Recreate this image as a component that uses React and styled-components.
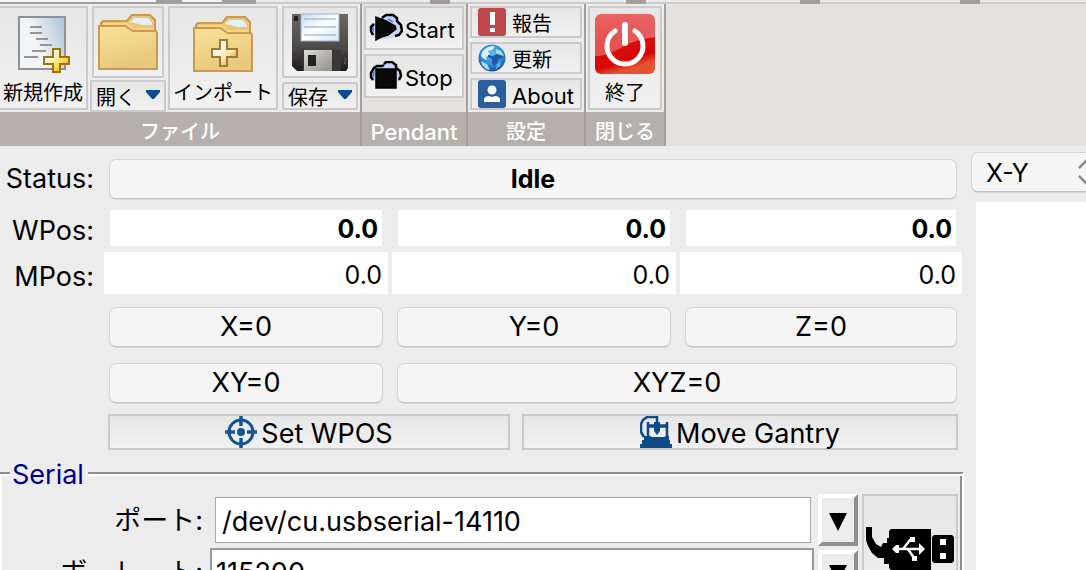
import React from "react";
import styled, { createGlobalStyle, css } from "styled-components";

const ui = '"Inter", "Noto Sans CJK JP", sans-serif';
const ink = "#000";
const face = "#ececec";
const edge = "#cbcbcb";
const taupe = "#a39e9b";

const GlobalStyle = createGlobalStyle`
  *, *::before, *::after { box-sizing: border-box; }
  html, body, #root { height: 100%; }
  body {
    margin: 0;
    overflow: hidden;
    background: ${face};
    color: ${ink};
    font-family: ${ui};
    font-size: 27px;
  }
  button, input, select { font: inherit; color: inherit; }
`;

const Window = styled.div`
  display: flex;
  flex-direction: column;
  height: 100%;
  overflow: hidden;
`;

/* Tab strip */

const TabStrip = styled.div`
  display: flex;
  flex: none;
  height: 4px;
  overflow: hidden;
  background: ${taupe};
`;

const TabFoot = styled.div`
  flex: ${(p) => (p.$grow ? "1 1 0" : "none")};
  width: ${(p) => p.$width || 0}px;
  margin-right: ${(p) => p.$gap || 0}px;
  background: ${(p) => (p.$raised ? "#f4f4f4" : "#e8eaeb")};
  border-bottom: 2px solid ${(p) => (p.$raised ? taupe : edge)};
`;

/* Ribbon */

const Ribbon = styled.header`
  display: flex;
  flex: none;
  height: 142px;
  background: #e5e1de;
`;

const Group = styled.section`
  display: flex;
  flex-direction: column;
  flex: none;
  border-right: 2px solid ${taupe};
`;

const GroupTools = styled.div`
  display: flex;
  align-items: flex-start;
  height: 108px;
  gap: ${(p) => p.$gap || 0}px;
  padding: 2px 2px 0 ${(p) => (p.$flush ? 0 : 2)}px;
  background: ${(p) => (p.$open ? "transparent" : face)};
`;

const GroupTitle = styled.h2`
  height: 34px;
  margin: 0;
  padding-top: 4px;
  background: #b5b0ad;
  color: #fff;
  font-size: ${(p) => (p.$latin ? 22 : 20)}px;
  font-weight: 500;
  line-height: 32px;
  text-align: center;
  white-space: nowrap;
`;

const Stack = styled.div`
  display: flex;
  flex-direction: column;
  align-items: center;
  gap: ${(p) => p.$gap || 0}px;
  margin-left: ${(p) => (p.$apart ? 2 : 0)}px;
  background: ${face};
`;

const Caption = styled.span`
  padding-top: 4px;
`;

const bevel = css`
  border: 2px solid ${edge};
  border-radius: 0;
  background: linear-gradient(#e6e6e6, #f1f1f1);
  padding: 0;
  margin: 0;
`;

const LargeTool = styled.button`
  ${bevel}
  display: flex;
  flex-direction: column;
  align-items: center;
  width: ${(p) => p.$width}px;
  height: 104px;
  padding-top: 6px;
  gap: 2px;
  font-size: 20px;
  line-height: 26px;
  white-space: nowrap;
  border-left-width: ${(p) => (p.$cut ? 0 : 2)}px;
`;

const IconTool = styled.button`
  ${bevel}
  display: flex;
  justify-content: center;
  align-items: flex-start;
  width: ${(p) => p.$width}px;
  height: 72px;
  padding-top: 4px;
`;

const MenuTool = styled.button`
  ${bevel}
  display: flex;
  align-items: center;
  justify-content: center;
  gap: 10px;
  width: 76px;
  height: ${(p) => p.$height}px;
  font-size: 20px;
  line-height: 24px;
  white-space: nowrap;
`;

const RowTool = styled.button`
  ${bevel}
  display: flex;
  align-items: center;
  gap: ${(p) => p.$gap}px;
  width: ${(p) => p.$width}px;
  height: ${(p) => p.$height}px;
  padding: 0 0 0 ${(p) => p.$inset}px;
  font-size: ${(p) => (p.$latin ? 22 : 20)}px;
  line-height: 24px;
  white-space: nowrap;
  svg { flex: none; }
`;

/* Body */

const Body = styled.main`
  display: grid;
  grid-template-columns: minmax(0, 1fr) 122px;
  flex: 1;
  min-height: 0;
  overflow: hidden;
`;

const Panel = styled.div`
  min-width: 0;
`;

const Readout = styled.div`
  display: grid;
  grid-template-columns: 100px minmax(0, 284fr) minmax(0, 284fr) minmax(0, 282fr);
  column-gap: 4px;
  padding: 13px 2px 0 0;
`;

const RowLabel = styled.label`
  padding-right: 6px;
  text-align: right;
  line-height: ${(p) => p.$height}px;
  white-space: nowrap;
  grid-column: 1;
`;

const PushButton = styled.button`
  grid-column: ${(p) => p.$column};
  height: 40px;
  margin: 0 5px ${(p) => p.$below}px;
  padding: 0;
  border: 1px solid #d4d4d4;
  border-bottom-color: #c4c4c4;
  border-radius: 7px;
  background: #f5f5f5;
  box-shadow: 0 1px 1px rgba(0, 0, 0, 0.08);
  font-size: ${(p) => (p.$strong ? 25 : 27)}px;
  font-weight: ${(p) => (p.$strong ? 700 : 400)};
  line-height: 38px;
`;

const WorkField = styled.input`
  min-width: 0;
  height: 36px;
  margin: 0 6px 6px;
  padding: 2px 4px 0 0;
  border: 0;
  background: #fff;
  text-align: right;
  font-size: 25px;
  font-weight: 700;
`;

const MachineField = styled.input`
  min-width: 0;
  height: 42px;
  margin: 0 0 13px;
  padding: 4px 6px 0 0;
  border: 0;
  background: #fff;
  text-align: right;
  font-size: 25px;
`;

const Actions = styled.div`
  display: grid;
  grid-template-columns: 402fr 436fr;
  gap: 12px;
  padding: 0 6px 0 108px;
`;

const ActionButton = styled.button`
  ${bevel}
  display: flex;
  align-items: center;
  justify-content: center;
  gap: 4px;
  height: 36px;
  line-height: 28px;
  white-space: nowrap;
  svg { flex: none; }
`;

const Fieldset = styled.fieldset`
  min-width: 0;
  height: 200px;
  margin: 8px 0 0 -2px;
  padding: 6px 2px 0 10px;
  border: 2px solid;
  border-color: #8f8f8f #fff #fff #8f8f8f;
  box-shadow: inset 2px 2px 0 #fff, inset -2px -2px 0 #8f8f8f;
`;

const Legend = styled.legend`
  height: 30px;
  padding: 0 4px 0 2px;
  background: ${face};
  color: #00008b;
  line-height: 34px;
`;

const PortGrid = styled.div`
  display: grid;
  grid-template-columns: 193px minmax(0, 1fr) 40px 96px;
  grid-template-rows: 52px auto;
  column-gap: 4px;
  align-items: start;
  padding-right: 2px;
`;

const PortLabel = styled.label`
  padding-top: 6px;
  text-align: right;
  line-height: 42px;
  white-space: nowrap;
  grid-column: 1;
`;

const Entry = styled.input`
  min-width: 0;
  height: 46px;
  margin: 3px 3px 0 8px;
  padding: 2px 6px 0;
  border: 1px solid #a8a8a8;
  border-radius: 0;
  background: #fff;
`;

const SunkenEntry = styled(Entry)`
  height: 48px;
  margin: 2px 0 0 3px;
  padding: 0 4px;
  border: 2px solid #999;
`;

const DropButton = styled.button`
  display: flex;
  align-items: center;
  justify-content: center;
  height: ${(p) => p.$height}px;
  margin-top: ${(p) => p.$above || 0}px;
  padding: 4px 0 0;
  border: 4px solid;
  border-color: #fff #8f8f8f #8f8f8f #fff;
  background: ${face};
`;

const ConnectButton = styled.button`
  ${bevel}
  grid-column: 4;
  grid-row: 1 / span 2;
  display: flex;
  justify-content: center;
  height: 140px;
  padding-top: 30px;
`;

const View = styled.aside`
  display: flex;
  flex-direction: column;
  min-width: 0;
  padding: 6px 0 0 7px;
  overflow: hidden;
`;

const SelectFrame = styled.div`
  display: flex;
  flex: none;
  align-items: center;
  position: relative;
  height: 40px;
  margin-right: -16px;
  svg {
    position: absolute;
    right: 8px;
    pointer-events: none;
  }
`;

const ViewSelect = styled.select`
  width: 100%;
  height: 40px;
  padding: 2px 0 0 14px;
  appearance: none;
  border: 1px solid #d4d4d4;
  border-bottom-color: #c4c4c4;
  border-radius: 7px;
  background: #f5f5f5;
  box-shadow: 0 1px 1px rgba(0, 0, 0, 0.08);
  font-size: 25px;
`;

const Canvas = styled.div`
  flex: 1;
  margin: 10px 0 0 5px;
  background: #fff;
`;

/* Drawings */

const NewIcon = () => (
  <svg width="56" height="60" viewBox="0 0 56 60" aria-hidden="true">
    <defs>
      <linearGradient id="sheet" x1="0" y1="0.4" x2="1" y2="0">
        <stop offset="0.3" stopColor="#f2f4f5" />
        <stop offset="1" stopColor="#a9c3da" />
      </linearGradient>
      <linearGradient id="gold" x1="0" y1="0" x2="1" y2="1">
        <stop offset="0.3" stopColor="#fffbe0" />
        <stop offset="0.6" stopColor="#ffe25c" />
        <stop offset="1" stopColor="#d59a12" />
      </linearGradient>
    </defs>
    <rect x="4" y="3" width="46" height="52" fill="url(#sheet)" stroke="#8d9299" strokeWidth="2" />
    <path d="M15 13h12M15 19h12M21 25h12M25 31h12M17 37h14M9 43h14" stroke="#92969b" strokeWidth="2" />
    <path d="M38 35h7v8h9v7h-9v8h-7v-8h-9v-7h9z" fill="url(#gold)" stroke="#9a7410" strokeWidth="2" />
  </svg>
);

const FolderIcon = ({ plus }) => (
  <svg width="62" height="60" viewBox="0 0 62 60" aria-hidden="true">
    <defs>
      <linearGradient id="folder" x1="0" y1="0" x2="0.3" y2="1">
        <stop offset="0" stopColor="#f9e19a" />
        <stop offset="1" stopColor="#e8c87c" />
      </linearGradient>
      <linearGradient id="cross" x1="0" y1="0" x2="1" y2="1">
        <stop offset="0.3" stopColor="#fffdf5" />
        <stop offset="0.6" stopColor="#fbe6a4" />
        <stop offset="1" stopColor="#c98a32" />
      </linearGradient>
    </defs>
    <path d="M4 16v-5l2-2h24l5-6h18l5 5v14H4z" fill="#eac67a" stroke="#cb9a50" strokeWidth="2" />
    <path d="M33 10l4-4h14l4 5v2h-9z" fill="#e4eef5" />
    <path d="M2 14h26l8 5h23l1 2v36H2z" fill="url(#folder)" stroke="#cb9a50" strokeWidth="2" />
    <path d="M6 12h24l6 5h21" fill="none" stroke="#f4d588" strokeWidth="2" />
    {plus && (
      <path d="M28 26h7v9h10v8H35v9h-7v-9H20v-8h8z" fill="url(#cross)" stroke="#9c7a35" strokeWidth="2" />
    )}
  </svg>
);

const SaveIcon = () => (
  <svg width="58" height="60" viewBox="0 0 58 60" aria-hidden="true">
    <defs>
      <linearGradient id="disk" x1="0" y1="0" x2="0" y2="1">
        <stop offset="0" stopColor="#6a6666" />
        <stop offset="0.6" stopColor="#4c4848" />
        <stop offset="1" stopColor="#1d1a1a" />
      </linearGradient>
      <linearGradient id="slip" x1="0" y1="0" x2="1" y2="1">
        <stop offset="0" stopColor="#c4dcf0" />
        <stop offset="0.5" stopColor="#fff" />
        <stop offset="1" stopColor="#d5e4f1" />
      </linearGradient>
      <linearGradient id="metal" x1="0" y1="0" x2="1" y2="1">
        <stop offset="0" stopColor="#deded8" />
        <stop offset="1" stopColor="#8e8d88" />
      </linearGradient>
    </defs>
    <path d="M1 2h56v54l-2 3H6l-5-5z" fill="url(#disk)" />
    <rect x="3" y="4" width="4" height="5" fill="#242121" />
    <rect x="10" y="2" width="38" height="27" fill="url(#slip)" stroke="#9fb3c4" strokeWidth="1" />
    <path d="M13 7h32M13 15h32M13 23h32" stroke="#a9bdd6" strokeWidth="1.5" />
    <rect x="12" y="38" width="38" height="21" fill="#3a3636" />
    <rect x="13" y="38" width="28" height="21" fill="url(#metal)" />
    <rect x="17" y="43" width="8" height="11" fill="#242121" />
    <path d="M54 46l1 2-2 3 2 1" stroke="#6a6666" fill="none" />
  </svg>
);

const CaretIcon = () => (
  <svg width="14" height="12" viewBox="0 0 14 12" aria-hidden="true">
    <path d="M0 0h14v2L8 9H6L0 2z" fill="#0b4d8f" />
  </svg>
);

const PendantIcon = ({ stop }) => (
  <svg width="34" height="30" viewBox="0 0 34 30" aria-hidden="true">
    {stop ? (
      <>
        <path d="M4 20l-2-6 3-6 4-3h6l3-4h6l4 4 3 4 1 6-2 5-3 2z" fill="#c9d2f8" />
        <path
          d="M4 19l-2-3v-4l3-5 3-2h5l2-1M15 3l2-2h6l4 3v3l4 3 1 5-2 4"
          fill="none"
          stroke="#000"
          strokeWidth="2.5"
        />
        <path d="M4 16l1-6" stroke="#647fd6" strokeWidth="2" />
        <rect x="7" y="8" width="20" height="19" fill="#080808" stroke="#000" strokeWidth="1.5" />
      </>
    ) : (
      <>
        <path d="M5 11l4-5 6-3 4-1h7l3 5 3 5v6l-4 5-5 2-16 2-5-8z" fill="#c9d2f8" />
        <path
          d="M4 22l-2-4v-4l3-3M13 5l4-3h7l4 3v3l4 4 1 6-3 4-4 1"
          fill="none"
          stroke="#000"
          strokeWidth="2.5"
        />
        <path d="M4 19v-5M19 6l5 3" stroke="#647fd6" strokeWidth="2" />
        <path d="M7 4v23l5-3 7-2 8-6-1-3-9-5z" fill="#080808" stroke="#000" strokeWidth="1.5" />
      </>
    )}
  </svg>
);

const ReportIcon = () => (
  <svg width="28" height="28" viewBox="0 0 28 28" aria-hidden="true">
    <rect width="28" height="28" rx="3" fill="#be484c" />
    <path d="M12 4h5v13h-5zM12 20h5v4h-5z" fill="#fff" />
  </svg>
);

const GlobeIcon = () => (
  <svg width="28" height="28" viewBox="0 0 28 28" aria-hidden="true">
    <defs>
      <radialGradient id="sea" cx="0.5" cy="0.35" r="0.65">
        <stop offset="0" stopColor="#68bdf5" />
        <stop offset="0.65" stopColor="#2f86d6" />
        <stop offset="1" stopColor="#1b4c8c" />
      </radialGradient>
    </defs>
    <circle cx="14" cy="14" r="13.5" fill="url(#sea)" />
    <path d="M4 8l4-4 6-2 3 1-3 3-4 1 2 3-4 3 1 3-3-1-3-3z" fill="#d9eef6" />
    <path d="M10 11l5 1 4-2 5 1 1 3-4 1-2 4-3 3-2-3v-4l-4-2z" fill="#1c56a4" />
    <path d="M18 5l5 2 3 5-4-1-4-2zM3 17l6 3 3 6-4-1-4-4z" fill="#9fe0ea" />
    <path d="M19 20l4-2-1 4-4 3z" fill="#5bb4e6" />
  </svg>
);

const AboutIcon = () => (
  <svg width="28" height="28" viewBox="0 0 28 28" aria-hidden="true">
    <rect width="28" height="28" rx="3" fill="#285f9c" />
    <circle cx="14" cy="10" r="4.500" fill="#fff" />
    <path d="M6 22v-3q1-3 5-3l3 1 3-1q4 0 5 3v3z" fill="#fff" />
  </svg>
);

const ExitIcon = () => (
  <svg width="60" height="60" viewBox="0 0 60 60" aria-hidden="true">
    <defs>
      <linearGradient id="red" x1="0" y1="0" x2="0.3" y2="1">
        <stop offset="0" stopColor="#e84a48" />
        <stop offset="0.5" stopColor="#dc1212" />
        <stop offset="0.85" stopColor="#d90505" />
        <stop offset="1" stopColor="#e8532f" />
      </linearGradient>
      <linearGradient id="shine" x1="0" y1="0" x2="1" y2="1">
        <stop offset="0" stopColor="#fff" stopOpacity="0.15" />
        <stop offset="1" stopColor="#fff" stopOpacity="0.4" />
      </linearGradient>
    </defs>
    <rect width="60" height="60" rx="6" fill="url(#red)" />
    <path d="M6 0h48q6 0 6 6v17Q40 25 24 35 8 43 0 42V6q0-6 6-6z" fill="url(#shine)" />
    <path d="M20 17a18 18 0 1 0 20 0" fill="none" stroke="#fff" strokeWidth="5" strokeLinecap="round" />
    <path d="M30 11v18" stroke="#fff" strokeWidth="6" strokeLinecap="round" />
  </svg>
);

const TargetIcon = () => (
  <svg width="32" height="32" viewBox="0 0 32 32" aria-hidden="true">
    <g fill="none" stroke="#165591">
      <circle cx="16" cy="16" r="12" strokeWidth="3" />
      <path d="M16 0v10M16 22v10M0 16h10M22 16h10" strokeWidth="3.5" />
    </g>
    <circle cx="16" cy="16" r="4" fill="#165591" />
  </svg>
);

const GantryIcon = () => (
  <svg width="32" height="32" viewBox="0 0 32 32" aria-hidden="true">
    <g fill="none" stroke="#0e4a86">
      <path d="M17 7V1H7L3 4 1 8v8l3 5" strokeWidth="2.5" />
      <path d="M8 6v16M27 6v16" strokeWidth="2.5" />
      <path d="M7 10h21" strokeWidth="3.5" />
    </g>
    <path d="M14 6h6v9l-3 4-3-4z" fill="#0e4a86" />
    <path d="M4 20h6l2 1h12l2-1h3v4h1v4h2v4H0v-4h2v-4h2z" fill="#0e4a86" />
  </svg>
);

const ArrowIcon = () => (
  <svg width="18" height="18" viewBox="0 0 18 18" aria-hidden="true">
    <path d="M0 0h18L9 18z" />
  </svg>
);

const ChevronsIcon = () => (
  <svg width="16" height="28" viewBox="0 0 16 28" aria-hidden="true">
    <path d="M1 10l7-7 7 7M1 18l7 7 7-7" fill="none" stroke="#8c8c8c" strokeWidth="2.5" />
  </svg>
);

const UsbIcon = () => (
  <svg width="90" height="46" viewBox="0 0 90 46" aria-hidden="true">
    <path d="M1 1h6v10l4 7 5 3 2-4h4v-5h2V5l2-2h40v41H26l-2-2v-4h-5v-6h-6l-6-5-4-7-2-6z" />
    <path d="M67 11l2-2h18l2 2v24l-2 2H69l-2-2z" />
    <path d="M75 13h6v6h-6zM75 27h6v6h-6z" fill="#fff" />
    <g fill="none" stroke="#fff" strokeWidth="2.5">
      <path d="M31 23h28M38 23l7-9h4M43 23l6 9h3" />
    </g>
    <path d="M27 23l4-4h3v8h-3zM54 17l6 6-6 6zM45 11h5v5h-5zM47 30h5v5h-5z" fill="#fff" />
  </svg>
);

export default function App() {
  return (
    <Window>
      <GlobalStyle />
      <TabStrip>
        <TabFoot $raised $width={156} $gap={26} />
        <TabFoot $raised $width={40} $gap={34} />
        <TabFoot $width={174} $gap={20} />
        <TabFoot $width={176} $gap={20} />
        <TabFoot $width={154} $gap={20} />
        <TabFoot $width={140} $gap={20} />
        <TabFoot $grow />
      </TabStrip>

      <Ribbon>
        <Group>
          <GroupTools $gap={2} $flush>
            <LargeTool $width={88} $cut>
              <NewIcon />
              <Caption>新規作成</Caption>
            </LargeTool>
            <Stack $gap={2}>
              <IconTool $width={72} aria-label="開く">
                <FolderIcon />
              </IconTool>
              <MenuTool $height={32}>
                <Caption>開く</Caption>
                <CaretIcon />
              </MenuTool>
            </Stack>
            <LargeTool $width={110}>
              <FolderIcon plus />
              <Caption>インポート</Caption>
            </LargeTool>
            <Stack $gap={4} $apart>
              <IconTool $width={76} aria-label="保存">
                <SaveIcon />
              </IconTool>
              <MenuTool $height={28}>
                <Caption>保存</Caption>
                <CaretIcon />
              </MenuTool>
            </Stack>
          </GroupTools>
          <GroupTitle>ファイル</GroupTitle>
        </Group>

        <Group>
          <GroupTools $open>
            <Stack $gap={4}>
              <RowTool $width={100} $height={44} $inset={3} $gap={2} $latin>
                <PendantIcon />
                <Caption>Start</Caption>
              </RowTool>
              <RowTool $width={100} $height={44} $inset={3} $gap={2} $latin>
                <PendantIcon stop />
                <Caption>Stop</Caption>
              </RowTool>
            </Stack>
          </GroupTools>
          <GroupTitle $latin>Pendant</GroupTitle>
        </Group>

        <Group>
          <GroupTools>
            <Stack $gap={4}>
              <RowTool $width={112} $height={32} $inset={6} $gap={6}>
                <ReportIcon />
                <Caption>報告</Caption>
              </RowTool>
              <RowTool $width={112} $height={32} $inset={6} $gap={6}>
                <GlobeIcon />
                <Caption>更新</Caption>
              </RowTool>
              <RowTool $width={112} $height={32} $inset={6} $gap={6} $latin>
                <AboutIcon />
                <Caption>About</Caption>
              </RowTool>
            </Stack>
          </GroupTools>
          <GroupTitle>設定</GroupTitle>
        </Group>

        <Group>
          <GroupTools>
            <LargeTool $width={74}>
              <ExitIcon />
              <Caption>終了</Caption>
            </LargeTool>
          </GroupTools>
          <GroupTitle>閉じる</GroupTitle>
        </Group>
      </Ribbon>

      <Body>
        <Panel>
          <Readout>
            <RowLabel htmlFor="status" $height={40}>Status:</RowLabel>
            <PushButton id="status" $column="2 / 5" $below={11} $strong>Idle</PushButton>

            <RowLabel htmlFor="wx" $height={42}>WPos:</RowLabel>
            <WorkField id="wx" readOnly defaultValue="0.0" />
            <WorkField aria-label="WPos Y" readOnly defaultValue="0.0" />
            <WorkField aria-label="WPos Z" readOnly defaultValue="0.0" />

            <RowLabel htmlFor="mx" $height={50}>MPos:</RowLabel>
            <MachineField id="mx" readOnly defaultValue="0.0" />
            <MachineField aria-label="MPos Y" readOnly defaultValue="0.0" />
            <MachineField aria-label="MPos Z" readOnly defaultValue="0.0" />

            <PushButton $column="2" $below={16}>X=0</PushButton>
            <PushButton $column="3" $below={16}>Y=0</PushButton>
            <PushButton $column="4" $below={16}>Z=0</PushButton>
            <PushButton $column="2" $below={11}>XY=0</PushButton>
            <PushButton $column="3 / 5" $below={11}>XYZ=0</PushButton>
          </Readout>

          <Actions>
            <ActionButton>
              <TargetIcon />
              <Caption>Set WPOS</Caption>
            </ActionButton>
            <ActionButton>
              <GantryIcon />
              <Caption>Move Gantry</Caption>
            </ActionButton>
          </Actions>

          <Fieldset>
            <Legend>Serial</Legend>
            <PortGrid>
              <PortLabel htmlFor="port">ポート:</PortLabel>
              <Entry id="port" defaultValue="/dev/cu.usbserial-14110" />
              <DropButton $height={52} aria-label="ポート一覧">
                <ArrowIcon />
              </DropButton>
              <ConnectButton aria-label="接続">
                <UsbIcon />
              </ConnectButton>
              <PortLabel htmlFor="baud">ボーレート:</PortLabel>
              <SunkenEntry id="baud" defaultValue="115200" />
              <DropButton $height={44} $above={4} aria-label="ボーレート一覧">
                <ArrowIcon />
              </DropButton>
            </PortGrid>
          </Fieldset>
        </Panel>

        <View>
          <SelectFrame>
            <ViewSelect aria-label="View" defaultValue="X-Y">
              <option>X-Y</option>
            </ViewSelect>
            <ChevronsIcon />
          </SelectFrame>
          <Canvas />
        </View>
      </Body>
    </Window>
  );
}
